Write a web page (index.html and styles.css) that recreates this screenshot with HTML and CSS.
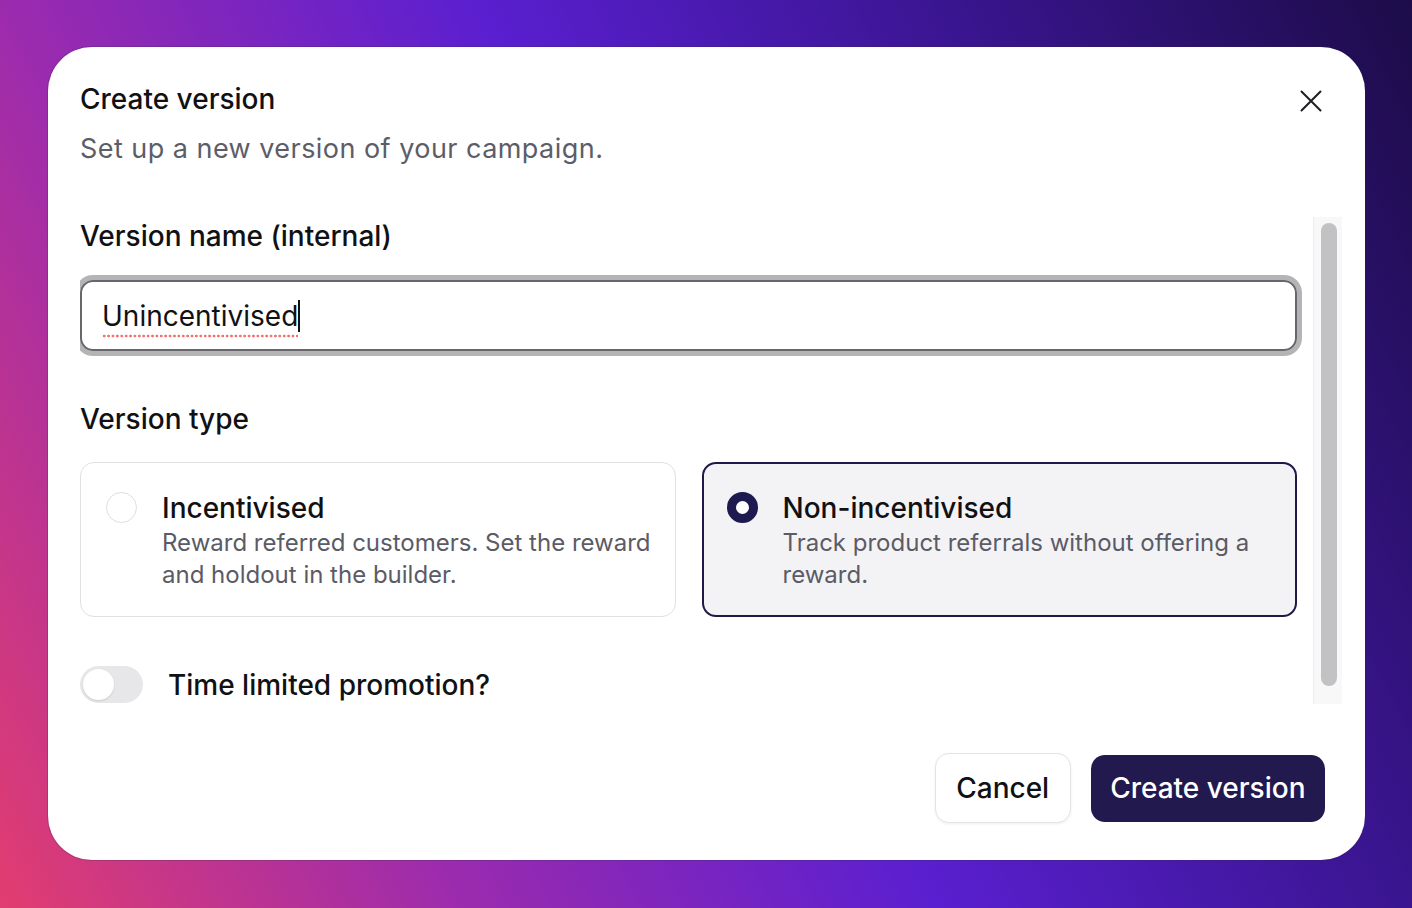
FILE: index.html
```html
<!DOCTYPE html>
<html lang="en">
<head>
<meta charset="utf-8">
<title>Create version</title>
<link rel="stylesheet" href="styles.css">
</head>
<body>
<div class="modal" role="dialog" aria-labelledby="dlg-title">
  <header class="modal-header">
    <div class="heading">
      <h2 id="dlg-title" class="title">Create version</h2>
      <p class="subtitle">Set up a new version of your campaign.</p>
    </div>
    <button class="close-btn" aria-label="Close">
      <svg width="22" height="22" viewBox="0 0 22 22" fill="none" stroke="#1d1d22" stroke-width="2" stroke-linecap="round"><path d="M1.5 1.5 20.5 20.5M20.5 1.5 1.5 20.5"/></svg>
    </button>
  </header>

  <div class="modal-body">
    <div class="content">
      <label class="field-label">Version name (internal)</label>
      <div class="text-input"><span class="typed">Unincentivised</span><span class="caret"></span></div>

      <div class="field-label type-label">Version type</div>
      <div class="cards">
        <div class="card">
          <span class="radio"></span>
          <div class="card-text">
            <div class="card-title">Incentivised</div>
            <div class="card-desc">Reward referred customers. Set the reward and holdout in the builder.</div>
          </div>
        </div>
        <div class="card selected">
          <span class="radio checked"></span>
          <div class="card-text">
            <div class="card-title">Non-incentivised</div>
            <div class="card-desc">Track product referrals without offering a reward.</div>
          </div>
        </div>
      </div>

      <div class="toggle-row">
        <span class="toggle"><span class="knob"></span></span>
        <span class="toggle-label">Time limited promotion?</span>
      </div>
    </div>
    <div class="scrollbar"><div class="thumb"></div></div>
  </div>

  <footer class="modal-footer">
    <button class="btn btn-secondary">Cancel</button>
    <button class="btn btn-primary">Create version</button>
  </footer>
</div>
</body>
</html>
```

FILE: styles.css
```css
* { box-sizing: border-box; }

html, body { margin: 0; height: 100%; }

body {
  width: 1412px;
  height: 908px;
  padding: 47px 47px 48px 48px;
  font-family: "Inter", "Noto Sans", sans-serif;
  color: #111114;
  background: linear-gradient(63deg, #e23d70 0%, #9b2bae 25%, #5a1fd0 50%, #3a1590 75%, #1c0c48 100%);
  overflow: hidden;
}

.modal {
  width: 1317px;
  height: 813px;
  background: #fff;
  border-radius: 44px;
  box-shadow: 0 0 0 1px rgba(40, 40, 60, 0.22);
  padding: 34px 23px 37px 32px;
  display: flex;
  flex-direction: column;
}

.modal-header {
  display: flex;
  justify-content: space-between;
  align-items: flex-start;
}

.title {
  margin: 0;
  font-size: 28px;
  line-height: 36px;
  font-weight: 500;
}

.subtitle {
  margin: 14px 0 0;
  font-size: 27px;
  line-height: 36px;
  color: #5d5d68;
  letter-spacing: 0.46px;
}

.close-btn {
  margin: 9px 20px 0 0;
  padding: 0;
  border: 0;
  background: none;
  width: 22px;
  height: 22px;
  display: flex;
}

.modal-body {
  margin-top: 50px;
  height: 488px;
  display: flex;
  gap: 16px;
  overflow: hidden;
}

.content {
  flex: 1;
  min-width: 0;
  display: flex;
  flex-direction: column;
}

.field-label {
  display: block;
  font-size: 28px;
  line-height: 36px;
  font-weight: 500;
}

.content > .field-label:first-child { margin-top: 1px; }

.text-input {
  margin-top: 26px;
  height: 71px;
  border: 2px solid #67676b;
  border-radius: 13px;
  box-shadow: 0 0 0 5px #b4b4b6;
  display: flex;
  align-items: center;
  padding-left: 20px;
  font-size: 28px;
}

.typed {
  line-height: 32px;
  padding-bottom: 6px;
  margin-top: 6px;
  background: radial-gradient(circle, #f27272 1.1px, rgba(242, 114, 114, 0) 1.7px) 0 100% / 4.4px 4px repeat-x;
}

.caret {
  width: 2px;
  height: 32px;
  background: #111;
  margin-left: 0;
}

.type-label { margin-top: 50px; }

.cards {
  margin-top: 25px;
  display: grid;
  grid-template-columns: 1fr 1fr;
  gap: 26px;
}

.card {
  height: 155px;
  border: 1px solid #e1e1e4;
  border-radius: 14px;
  padding: 27px 14px 0 25px;
  display: flex;
  gap: 25px;
}

.card.selected {
  border: 2px solid #1f1848;
  background: #f3f3f6;
  padding: 26px 13px 0 23px;
}

.radio {
  flex: none;
  width: 31px;
  height: 31px;
  border-radius: 50%;
  border: 1px solid #dedee2;
  background: #fff;
  margin-top: 2px;
}

.radio.checked {
  border: 9px solid #1e1a4f;
}

.card-title {
  font-size: 28px;
  line-height: 36px;
  font-weight: 500;
}

.card-desc {
  margin-top: 1px;
  font-size: 24px;
  line-height: 32px;
  color: #5b5b66;
}

.toggle-row {
  margin-top: 49px;
  display: flex;
  align-items: center;
  gap: 25px;
}

.toggle {
  width: 63px;
  height: 37px;
  border-radius: 19px;
  background: #e7e7ea;
  padding: 3px;
  display: flex;
}

.knob {
  width: 31px;
  height: 31px;
  border-radius: 50%;
  background: #fff;
  box-shadow: 0 1px 2px rgba(0, 0, 0, 0.12);
}

.toggle-label {
  font-size: 28px;
  line-height: 36px;
  font-weight: 500;
}

.scrollbar {
  flex: none;
  width: 29px;
  background: #f8f8f9;
  border-left: 1px solid #ececee;
  padding: 6px 5px 0 7px;
}

.thumb {
  height: 463px;
  border-radius: 8px;
  background: #c2c2c4;
}

.modal-footer {
  margin-top: 49px;
  display: flex;
  justify-content: flex-end;
  align-items: center;
  gap: 20px;
  padding-right: 17px;
}

.btn {
  border-radius: 14px;
  font-family: inherit;
  font-size: 28px;
  font-weight: 500;
  cursor: pointer;
}

.btn-secondary {
  height: 70px;
  padding: 0 20.5px;
  background: #fff;
  color: #111114;
  border: 1px solid #e4e4e7;
  box-shadow: 0 1px 3px rgba(0, 0, 0, 0.07);
}

.btn-primary {
  height: 67px;
  padding: 0 19.5px;
  background: #22194f;
  color: #fff;
  border: 0;
}
```
